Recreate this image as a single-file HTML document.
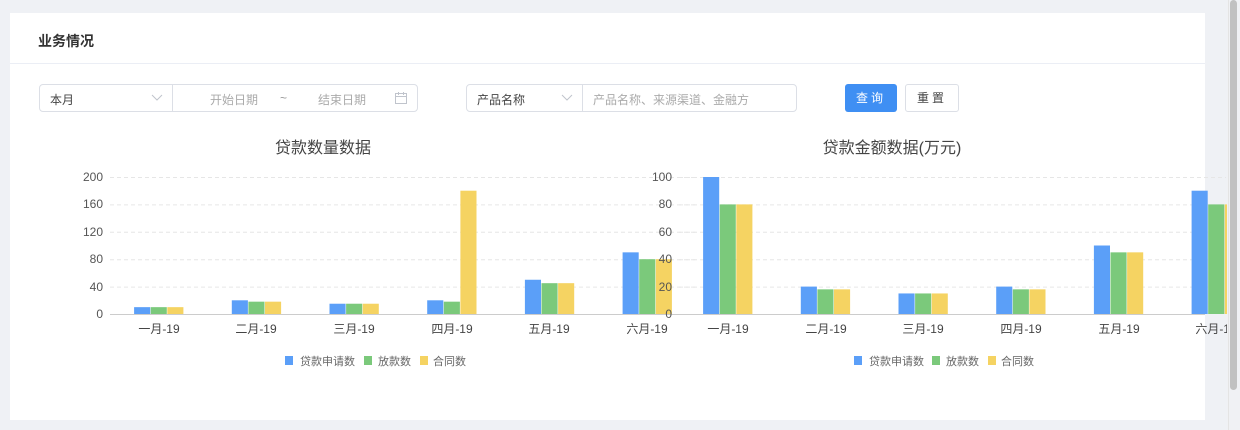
<!DOCTYPE html>
<html><head><meta charset="utf-8"><style>
body{margin:0;width:1240px;height:430px;background:#eff1f5;font-family:"Liberation Sans","Noto Sans CJK SC",sans-serif;overflow:hidden;position:relative}
.card{position:absolute;left:10px;top:13px;width:1195px;height:407px;background:#fff}
.hd{position:absolute;left:0;top:0;width:100%;height:50px;border-bottom:1px solid #ebeef5}
.hd span{position:absolute;left:28px;top:18px;font-size:14px;font-weight:bold;color:#333}
.box{position:absolute;top:84px;height:26px;border:1px solid #dcdfe6;border-radius:4px;background:#fff;font-size:12px}
.t{position:absolute;top:6px}
.btn{position:absolute;top:84px;height:28px;width:52px;border-radius:3px;font-size:12px;text-align:center;line-height:28px;letter-spacing:3px}
svg{position:absolute;left:0;top:0}
</style></head><body>
<div class="card"><div class="hd"><span>业务情况</span></div></div>
<div class="box" style="left:39px;width:377px">
 <span class="t" style="left:10px;color:#444">本月</span>
 <svg style="left:111px;top:9px" width="12" height="8"><path d="M1 1L6 6L11 1" fill="none" stroke="#c0c4cc"/></svg>
 <div style="position:absolute;left:132px;top:0;width:1px;height:26px;background:#dcdfe6"></div>
 <span class="t" style="left:170px;color:#aaa">开始日期</span>
 <span class="t" style="left:240px;color:#999">~</span>
 <span class="t" style="left:278px;color:#aaa">结束日期</span>
 <svg style="left:355px;top:7px" width="12" height="12"><rect x="0.5" y="1.5" width="11" height="10" fill="none" stroke="#c0c4cc"/><path d="M0.5 4.5H11.5M3.5 0V3M8.5 0V3" stroke="#c0c4cc"/></svg>
</div>
<div class="box" style="left:466px;width:329px">
 <span class="t" style="left:10px;color:#444">产品名称</span>
 <svg style="left:94px;top:9px" width="12" height="8"><path d="M1 1L6 6L11 1" fill="none" stroke="#c0c4cc"/></svg>
 <div style="position:absolute;left:115px;top:0;width:1px;height:26px;background:#dcdfe6"></div>
 <span class="t" style="left:126px;color:#aaa">产品名称、来源渠道、金融方</span>
</div>
<div class="btn" style="left:845px;background:#3f8ff3;color:#fff">查询</div>
<div class="btn" style="left:905px;border:1px solid #dcdfe6;height:26px;line-height:26px;color:#444;background:#fff">重置</div>

<svg width="1240" height="430" id="ch" style="font-family:'Liberation Sans','Noto Sans CJK SC',sans-serif">
<g font-size="16" fill="#444" text-anchor="middle"><text x="323" y="153">贷款数量数据</text><text x="892" y="153">贷款金额数据(万元)</text></g>
<g id="grid" stroke="#e6e6e6" stroke-dasharray="4,3"></g>
<g id="bars"></g>
<line x1="110" y1="314.5" x2="696" y2="314.5" stroke="#ccc"/>
<line x1="679" y1="314.5" x2="1205" y2="314.5" stroke="#ccc"/>
<g font-size="12" fill="#555" text-anchor="end">
<text x="103" y="181">200</text><text x="103" y="208">160</text><text x="103" y="236">120</text><text x="103" y="263">80</text><text x="103" y="291">40</text><text x="103" y="318">0</text>
<text x="672" y="181">100</text><text x="672" y="208">80</text><text x="672" y="236">60</text><text x="672" y="263">40</text><text x="672" y="291">20</text><text x="672" y="318">0</text>
</g>
<g font-size="12" fill="#444" text-anchor="middle">
<text x="159" y="333">一月-19</text><text x="256" y="333">二月-19</text><text x="354" y="333">三月-19</text><text x="452" y="333">四月-19</text><text x="549" y="333">五月-19</text><text x="647" y="333">六月-19</text>
<text x="728" y="333">一月-19</text><text x="826" y="333">二月-19</text><text x="923" y="333">三月-19</text><text x="1021" y="333">四月-19</text><text x="1119" y="333">五月-19</text><text x="1216" y="333">六月-19</text>
</g>
<g font-size="11" fill="#666">
<rect x="285" y="356" width="8" height="9" fill="#5b9ff8"/><text x="300" y="365">贷款申请数</text>
<rect x="364" y="356" width="8" height="9" fill="#7bc97b"/><text x="378" y="365">放款数</text>
<rect x="420" y="356" width="8" height="9" fill="#f5d362"/><text x="433" y="365">合同数</text>
<rect x="854" y="356" width="8" height="9" fill="#5b9ff8"/><text x="869" y="365">贷款申请数</text>
<rect x="932" y="356" width="8" height="9" fill="#7bc97b"/><text x="946" y="365">放款数</text>
<rect x="988" y="356" width="8" height="9" fill="#f5d362"/><text x="1001" y="365">合同数</text>
</g>
<rect x="1227" y="0" width="13" height="430" fill="#f0f1f4"/>
<rect x="1228" y="0" width="1" height="430" fill="#e4e4e4"/>
<rect x="1230" y="0" width="7" height="390" rx="3.5" fill="#c1c1c1"/>
</svg>
<script>
var ns="http://www.w3.org/2000/svg",g=document.getElementById("grid"),b=document.getElementById("bars");
function ln(x1,x2,y){var l=document.createElementNS(ns,"line");l.setAttribute("x1",x1);l.setAttribute("x2",x2);l.setAttribute("y1",y);l.setAttribute("y2",y);g.appendChild(l);}
for(var i=1;i<=5;i++){ln(110,696,314.5-i*27.4);ln(679,1226,314.5-i*27.4);}
var cols=["#5b9ff8","#7bc97b","#f5d362"];
function chart(x0,sc,data,maxX){data.forEach(function(d,i){var s=x0+97.7*i+24.1;d.forEach(function(v,j){var x=s+j*16.6,h=v*sc;if(x>maxX)return;var r=document.createElementNS(ns,"rect");r.setAttribute("x",x);r.setAttribute("y",314-h);r.setAttribute("width",Math.min(16.1,maxX-x));r.setAttribute("height",h);r.setAttribute("fill",cols[j]);b.appendChild(r);});});}
chart(110,0.685,[[10,10,10],[20,18,18],[15,15,15],[20,18,180],[50,45,45],[90,80,80]],1300);
chart(679,1.37,[[100,80,80],[20,18,18],[15,15,15],[20,18,18],[50,45,45],[90,80,80]],1227);
</script>
</body></html>
